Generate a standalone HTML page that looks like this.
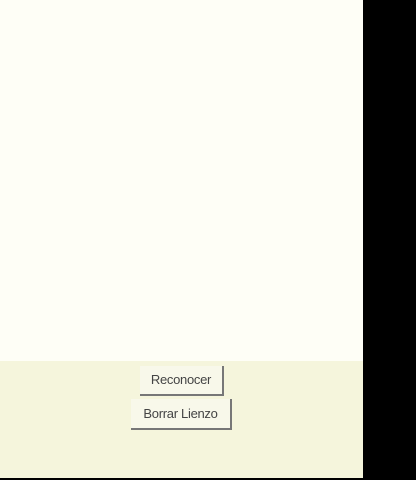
<!DOCTYPE html>
<html><head><style>
body{margin:0;width:416px;height:480px;background:#000;position:relative;overflow:hidden;font-family:"Liberation Sans",sans-serif}
#c{position:absolute;left:0;top:0;width:363px;height:361px;background:#fefef6}
#p{position:absolute;left:0;top:361px;width:363px;height:117px;background:#f5f5dc}
.b{position:absolute;font-size:13px;color:#444;text-align:center;border-right:2px solid #777;border-bottom:2px solid #777;box-sizing:border-box;background:#f8f8ea;letter-spacing:-0.3px}
</style></head><body>
<div id="c"></div><div id="p"></div>
<div class="b" style="left:140px;top:366px;width:84px;height:30px;line-height:28px">Reconocer</div>
<div class="b" style="left:131px;top:399px;width:101px;height:31px;line-height:29px">Borrar Lienzo</div>
</body></html>
